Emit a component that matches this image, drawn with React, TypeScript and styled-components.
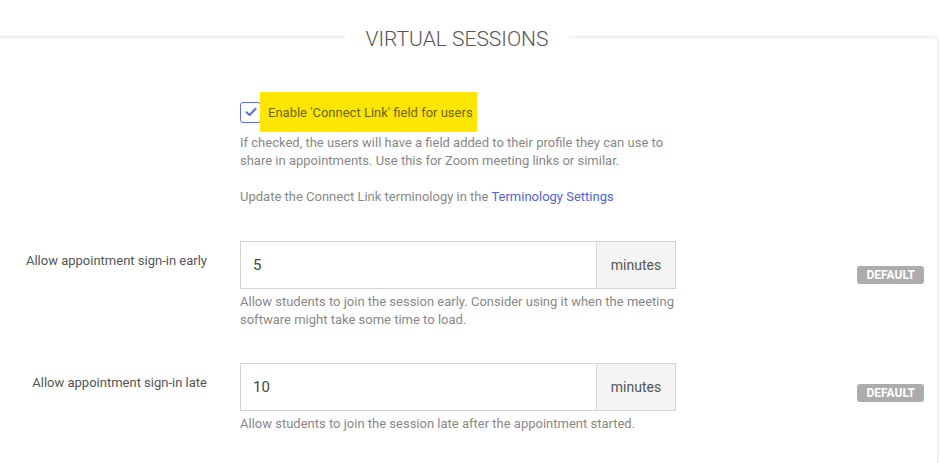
import React from "react";
import styled, { createGlobalStyle } from "styled-components";

const Global = createGlobalStyle`
  html, body { margin: 0; padding: 0; background: #fff; }
  body { font-family: Roboto, "Liberation Sans", Arial, sans-serif; width: 940px; height: 463px; overflow: hidden; }
  * { box-sizing: border-box; }
`;

const Page = styled.div`
  padding-top: 37px;
  width: 940px;
  height: 463px;
  overflow: hidden;
`;

const Card = styled.section`
  margin-left: -21px;
  margin-right: 2px;
  background: #fff;
  border: 1px solid #ececec;
  border-bottom: none;
  border-radius: 5px 5px 0 0;
  box-shadow: 0 -1px 6px rgba(0, 0, 0, 0.06);
  display: flex;
  flex-direction: column;
  padding: 0 13px 0 20px;
  height: 426px;
`;

const Title = styled.h2`
  align-self: center;
  margin: -12px 10px 0 0;
  padding: 0 20px;
  background: #fff;
  font-weight: 300;
  font-size: 21px;
  line-height: 26px;
  color: #555;
`;

const Row = styled.div<{ $mt: number }>`
  display: grid;
  grid-template-columns: 207px 436px 1fr;
  column-gap: 33px;
  align-items: start;
  margin-top: ${(p) => p.$mt}px;
`;

const Label = styled.div`
  justify-self: end;
  padding-top: 11px;
  font-size: 13px;
  line-height: 18px;
  color: #555;
  white-space: nowrap;
`;

const Field = styled.div`
  display: flex;
  flex-direction: column;
`;

const CheckLine = styled.label`
  display: flex;
  align-items: center;
`;

const Box = styled.span`
  width: 21px;
  height: 21px;
  border: 1.5px solid #6170d8;
  border-radius: 3px;
  display: flex;
  align-items: center;
  justify-content: center;
  background: #fff;
  flex: none;
`;

const Highlight = styled.span`
  background: #ffe600;
  height: 40px;
  display: flex;
  align-items: center;
  padding: 0 4px 0 8px;
  margin-left: -1px;
  font-size: 13px;
  color: #6b6508;
  white-space: nowrap;
`;

const Help = styled.p<{ $mt?: number }>`
  margin: ${(p) => p.$mt ?? 0}px 0 0 0;
  font-size: 13px;
  line-height: 18px;
  color: #888;
`;

const Link = styled.a`
  color: #5464d6;
  text-decoration: none;
`;

const InputGroup = styled.div`
  display: flex;
  height: 48px;
  border: 1px solid #d4d4d4;
  background: #fff;
`;

const Input = styled.input`
  flex: 1;
  min-width: 0;
  border: none;
  outline: none;
  padding: 0 12px;
  font-family: inherit;
  font-size: 15px;
  color: #444;
  background: transparent;
`;

const Addon = styled.span`
  width: 79px;
  flex: none;
  background: #f4f4f4;
  border-left: 1px solid #dcdcdc;
  display: flex;
  align-items: center;
  justify-content: center;
  font-size: 14px;
  color: #555;
`;

const Badge = styled.span<{ $mt: number }>`
  justify-self: end;
  margin-top: ${(p) => p.$mt}px;
  background: #acacac;
  color: #fff;
  font-size: 12px;
  font-weight: 700;
  line-height: 18px;
  height: 18px;
  padding: 0 9px;
  border-radius: 3px;
`;

const Check = () => (
  <svg width="12" height="10" viewBox="0 0 12 10" fill="none">
    <path d="M1.5 5.2 L4.6 8 L10.5 1.8" stroke="#6170d8" strokeWidth="2" strokeLinecap="round" strokeLinejoin="round" />
  </svg>
);

type Minute = { label: string; value: string; help: React.ReactNode; mt: number; badge: number };

const rows: Minute[] = [
  {
    label: "Allow appointment sign-in early",
    value: "5",
    help: (
      <>
        Allow students to join the session early. Consider using it when the meeting
        <br />
        software might take some time to load.
      </>
    ),
    mt: 35,
    badge: 25,
  },
  {
    label: "Allow appointment sign-in late",
    value: "10",
    help: <>Allow students to join the session late after the appointment started.</>,
    mt: 34,
    badge: 21,
  },
];

export default function App() {
  return (
    <Page>
      <Global />
      <Card>
        <Title>VIRTUAL SESSIONS</Title>
        <Row $mt={40}>
          <span />
          <Field>
            <CheckLine>
              <Box>
                <Check />
              </Box>
              <Highlight>Enable 'Connect Link' field for users</Highlight>
            </CheckLine>
            <Help $mt={2}>
              If checked, the users will have a field added to their profile they can use to
              <br />
              share in appointments. Use this for Zoom meeting links or similar.
            </Help>
            <Help $mt={18}>
              Update the Connect Link terminology in the <Link href="#">Terminology Settings</Link>
            </Help>
          </Field>
        </Row>
        {rows.map((r) => (
          <Row $mt={r.mt} key={r.label}>
            <Label>{r.label}</Label>
            <Field>
              <InputGroup>
                <Input defaultValue={r.value} />
                <Addon>minutes</Addon>
              </InputGroup>
              <Help $mt={4}>{r.help}</Help>
            </Field>
            <Badge $mt={r.badge}>DEFAULT</Badge>
          </Row>
        ))}
      </Card>
    </Page>
  );
}
